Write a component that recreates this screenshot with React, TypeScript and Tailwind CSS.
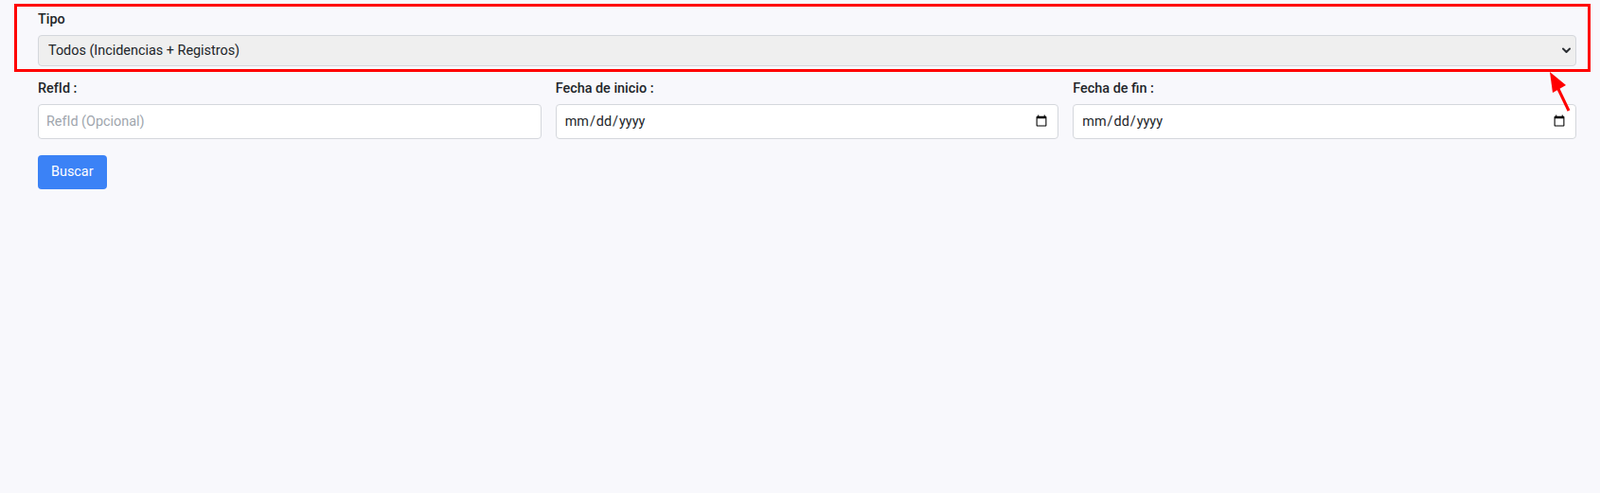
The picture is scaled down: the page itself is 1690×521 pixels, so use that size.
import { FC } from "react";

const fields = [
    { label: "RefId :", type: "text", placeholder: "RefId (Opcional)" },
    { label: "Fecha de inicio :", type: "date", placeholder: "" },
    { label: "Fecha de fin :", type: "date", placeholder: "" },
];

const App: FC = () => {
    return <div className="relative min-h-screen w-full bg-[#f8f8fc] pl-[40px] pr-[25px] pt-[11px] font-['Roboto',sans-serif] text-[#212529]">
        <label className="block text-[14.4px] leading-[20px] font-medium">Tipo</label>
        <div className="relative mt-[6px]">
            <select className="block w-full h-[33px] appearance-none rounded-[4px] border border-[#d4d7dc] bg-[#efefef] pl-[10px] pr-[30px] text-[14.4px] text-[#212529] outline-none">
                <option>Todos (Incidencias + Registros)</option>
                <option>Incidencias</option>
                <option>Registros</option>
            </select>
            <svg className="pointer-events-none absolute right-[6px] top-[13px]" width="9" height="7" viewBox="0 0 9 7">
                <path d="M1 1.5 L4.5 5 L8 1.5" fill="none" stroke="#2b2f33" strokeWidth="2" strokeLinecap="round" strokeLinejoin="round" />
            </svg>
        </div>

        <div className="mt-[14px] grid grid-cols-3 gap-x-[15px]">
            {fields.map(f => (
                <div key={f.label}>
                    <label className="block text-[14.4px] leading-[20px] font-medium">{f.label}</label>
                    <input
                        type={f.type}
                        placeholder={f.placeholder}
                        className="mt-[6px] block w-full h-[37px] rounded-[4px] border border-[#d4d7dc] bg-white px-[8px] text-[14.4px] text-[#212529] placeholder:text-[#a0a6ad] outline-none"
                    />
                </div>
            ))}
        </div>

        <button className="mt-[17px] h-[36px] rounded-[4px] bg-[#3b82f6] px-[14px] text-[14.4px] text-white">
            Buscar
        </button>

        {/* annotation overlay */}
        <div className="pointer-events-none absolute left-[15px] top-[4px] h-[72px] w-[1665px] border-[3px] border-[#ff0000]" />
        <svg className="pointer-events-none absolute left-0 top-0" width="1690" height="521">
            <line x1="1657" y1="117" x2="1645" y2="92" stroke="#ff0000" strokeWidth="3" />
            <polygon points="1637,76 1654,90 1640,98" fill="#ff0000" />
        </svg>
    </div>
};

export default App;
